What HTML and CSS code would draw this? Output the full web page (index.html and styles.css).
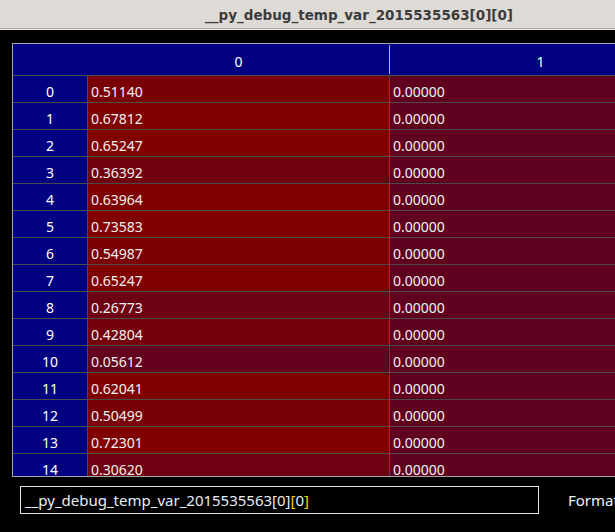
FILE: index.html
```html
<!DOCTYPE html>
<html>
<head>
<meta charset="utf-8">
<link rel="stylesheet" href="styles.css">
</head>
<body>
<div class="titlebar"><span class="title">__py_debug_temp_var_2015535563[0][0]</span></div>
<div class="titleline"></div>
<div class="main">
  <div class="table">
    <div class="hrow">
      <div class="corner"></div>
      <div class="hcell sep">0</div>
      <div class="hcell sep">1</div>
    </div>
    <div class="row"><div class="idx">0</div><div class="cell" style="background:rgb(121,0,7)">0.51140</div><div class="cell zero">0.00000</div></div>
    <div class="row"><div class="idx">1</div><div class="cell" style="background:rgb(128,0,0)">0.67812</div><div class="cell zero">0.00000</div></div>
    <div class="row"><div class="idx">2</div><div class="cell" style="background:rgb(128,0,0)">0.65247</div><div class="cell zero">0.00000</div></div>
    <div class="row"><div class="idx">3</div><div class="cell" style="background:rgb(113,0,14)">0.36392</div><div class="cell zero">0.00000</div></div>
    <div class="row"><div class="idx">4</div><div class="cell" style="background:rgb(127,0,1)">0.63964</div><div class="cell zero">0.00000</div></div>
    <div class="row"><div class="idx">5</div><div class="cell" style="background:rgb(128,0,0)">0.73583</div><div class="cell zero">0.00000</div></div>
    <div class="row"><div class="idx">6</div><div class="cell" style="background:rgb(123,0,5)">0.54987</div><div class="cell zero">0.00000</div></div>
    <div class="row"><div class="idx">7</div><div class="cell" style="background:rgb(128,0,0)">0.65247</div><div class="cell zero">0.00000</div></div>
    <div class="row"><div class="idx">8</div><div class="cell" style="background:rgb(109,0,19)">0.26773</div><div class="cell zero">0.00000</div></div>
    <div class="row"><div class="idx">9</div><div class="cell" style="background:rgb(117,0,11)">0.42804</div><div class="cell zero">0.00000</div></div>
    <div class="row"><div class="idx">10</div><div class="cell" style="background:rgb(98,0,29)">0.05612</div><div class="cell zero">0.00000</div></div>
    <div class="row"><div class="idx">11</div><div class="cell" style="background:rgb(126,0,1)">0.62041</div><div class="cell zero">0.00000</div></div>
    <div class="row"><div class="idx">12</div><div class="cell" style="background:rgb(121,0,7)">0.50499</div><div class="cell zero">0.00000</div></div>
    <div class="row"><div class="idx">13</div><div class="cell" style="background:rgb(128,0,0)">0.72301</div><div class="cell zero">0.00000</div></div>
    <div class="row"><div class="idx">14</div><div class="cell" style="background:rgb(111,0,17)">0.30620</div><div class="cell zero">0.00000</div></div>
  </div>
  <div class="bottom">
    <div class="expr">__py_debug_temp_var_2015535563[0]<span class="match">[</span>0<span class="match">]</span></div>
    <div class="format">Format</div>
  </div>
</div>
</body>
</html>
```
FILE: styles.css
```css
html, body {
  margin: 0;
  padding: 0;
}
body {
  width: 615px;
  height: 532px;
  overflow: hidden;
  background: #000;
  font-family: "Noto Sans", "Open Sans", sans-serif;
  font-size: 14px;
  color: #f2f2f2;
}
.titlebar {
  height: 28px;
  background: #dedad6;
  border-bottom: 1px solid #a9a5a1;
  display: flex;
  align-items: center;
  padding-left: 205px;
  box-sizing: content-box;
}
.title {
  font-family: "DejaVu Sans", sans-serif;
  font-size: 13.5px;
  font-weight: 700;
  color: #3c3c3c;
  white-space: nowrap;
  padding-top: 1px;
}
.titleline {
  height: 1px;
  background: #ecebe9;
}
.main {
  padding: 13px 0 0 12px;
}
.table {
  width: 900px;
  height: 432px;
  overflow: hidden;
  border: 1px solid #a6a6a6;
  border-right: none;
}
.hrow {
  display: flex;
  height: 32px;
  box-sizing: border-box;
  padding: 1px 0 1px;
  background: #000080;
  border-bottom: 1px solid #4a4a4a;
}
.corner {
  width: 75px;
  flex: none;
}
.hcell {
  width: 301px;
  flex: none;
  display: flex;
  align-items: center;
  justify-content: center;
  color: #fff;
  padding-top: 3px;
  box-sizing: border-box;
}
.hcell.sep {
  width: 302px;
  border-right: 1px solid #b8b8d8;
}
.row {
  display: flex;
  height: 27px;
  box-sizing: border-box;
  border-bottom: 1px solid #4a4a4a;
}
.idx {
  width: 74px;
  flex: none;
  background: #000080;
  border-right: 1px solid #4a4a4a;
  display: flex;
  align-items: center;
  justify-content: center;
  color: #fff;
  padding-top: 4px;
  box-sizing: content-box;
}
.cell {
  width: 298px;
  flex: none;
  padding-left: 3px;
  padding-top: 4px;
  border-right: 1px solid #4a4a4a;
  display: flex;
  align-items: center;
  color: #f4f0f0;
}
.cell.zero {
  background: #5f001e;
  padding-left: 3px;
}
.bottom {
  display: flex;
  align-items: center;
  margin-top: 9px;
  padding-left: 8px;
  gap: 29px;
}
.expr {
  width: 513px;
  height: 26px;
  flex: none;
  border: 1px solid #e4e4e4;
  padding-left: 4px;
  display: flex;
  align-items: center;
  font-size: 15px;
  color: #e6eef8;
  white-space: nowrap;
}
.match {
  color: #ffd400;
}
.format {
  font-size: 15px;
  color: #eef4ff;
  white-space: nowrap;
}
```
